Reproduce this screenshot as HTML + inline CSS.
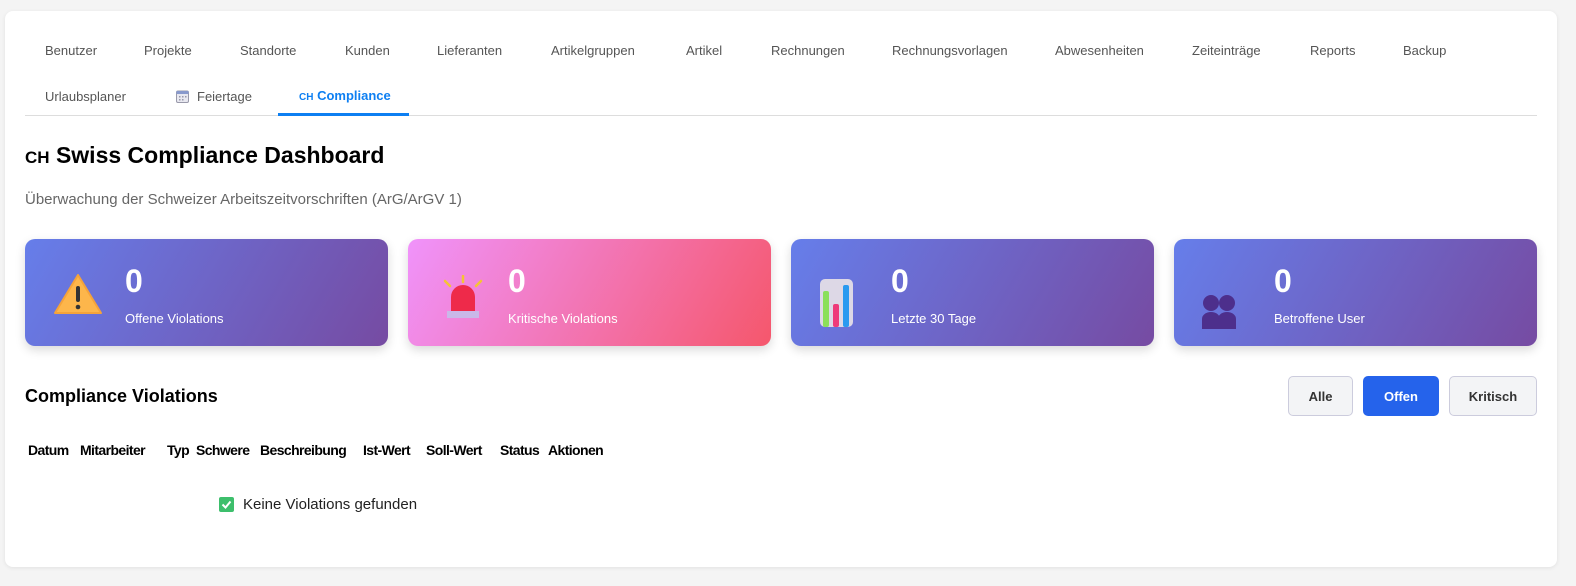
<!DOCTYPE html>
<html><head><meta charset="utf-8"><style>
*{margin:0;padding:0;box-sizing:border-box}
body{width:1576px;height:586px;background:#f4f4f4;font-family:"Liberation Sans",sans-serif;position:relative;overflow:hidden}
.box{position:absolute;left:5px;top:11px;width:1552px;height:556px;background:#fff;border-radius:8px;box-shadow:0 1px 4px rgba(0,0,0,.08)}
.a{position:absolute;white-space:nowrap}
.tab{font-size:13px;color:#555;top:43px}
.t2{top:89px}
.card{position:absolute;top:239px;width:363px;height:107px;border-radius:10px;background:linear-gradient(120deg,#667eea,#764ba2);box-shadow:0 4px 10px rgba(0,0,0,.15);color:#fff}
.card .n{position:absolute;left:100px;top:24px;font-size:32px;font-weight:bold}
.card .l{position:absolute;left:100px;top:72px;font-size:13px}
.card svg{position:absolute;left:28px;top:34px}
.btn{position:absolute;top:376px;height:40px;border-radius:5px;border:1px solid #ccd;background:#f3f4f6;font-size:13px;font-weight:bold;color:#333;display:flex;align-items:center;justify-content:center}
.th{top:442px;font-size:14px;font-weight:bold;letter-spacing:-0.6px;color:#000}
</style></head><body>
<div class="box"></div>
<span class="a tab" style="left:45px">Benutzer</span>
<span class="a tab" style="left:144px">Projekte</span>
<span class="a tab" style="left:240px">Standorte</span>
<span class="a tab" style="left:345px">Kunden</span>
<span class="a tab" style="left:437px">Lieferanten</span>
<span class="a tab" style="left:551px">Artikelgruppen</span>
<span class="a tab" style="left:686px">Artikel</span>
<span class="a tab" style="left:771px">Rechnungen</span>
<span class="a tab" style="left:892px">Rechnungsvorlagen</span>
<span class="a tab" style="left:1055px">Abwesenheiten</span>
<span class="a tab" style="left:1192px">Zeiteinträge</span>
<span class="a tab" style="left:1310px">Reports</span>
<span class="a tab" style="left:1403px">Backup</span>
<span class="a tab t2" style="left:45px">Urlaubsplaner</span>
<svg class="a" style="left:176px;top:90px" width="13" height="13"><rect x="0.5" y="1" width="12" height="11.5" rx="1.5" fill="#e8e8f0" stroke="#99a"/><rect x="0.5" y="1" width="12" height="3" fill="#8899cc"/><g fill="#99a"><rect x="3" y="6" width="1.5" height="1.5"/><rect x="6" y="6" width="1.5" height="1.5"/><rect x="9" y="6" width="1.5" height="1.5"/><rect x="3" y="9" width="1.5" height="1.5"/><rect x="6" y="9" width="1.5" height="1.5"/></g></svg>
<span class="a tab t2" style="left:197px">Feiertage</span>
<span class="a" style="left:299px;top:88px;font-size:13px;font-weight:bold;color:#0d7ff2"><span style="font-size:10px">CH</span> Compliance</span>
<div class="a" style="left:25px;top:115px;width:1512px;height:1px;background:#ddd"></div>
<div class="a" style="left:278px;top:113px;width:131px;height:3px;background:#0d7ff2"></div>
<div class="a" style="left:25px;top:142px;font-size:23px;font-weight:bold;color:#000"><span style="font-size:17px">CH</span> Swiss Compliance Dashboard</div>
<div class="a" style="left:25px;top:191px;font-size:15px;color:#666">Überwachung der Schweizer Arbeitszeitvorschriften (ArG/ArGV 1)</div>

<div class="card" style="left:25px"><svg width="50" height="42" viewBox="0 0 50 42"><path d="M25 2 L48 40 L2 40 Z" fill="#fdb64b" stroke="#f5a33a" stroke-width="2" stroke-linejoin="round"/><rect x="23" y="13" width="4" height="16" rx="2" fill="#333"/><circle cx="25" cy="34" r="2.3" fill="#333"/></svg><div class="n">0</div><div class="l">Offene Violations</div></div>
<div class="card" style="left:408px;background:linear-gradient(120deg,#f093fb,#f5576c)"><svg width="44" height="46" viewBox="0 0 44 46" style="top:36px;left:33px"><path d="M10 36 V22 a12 12 0 0 1 24 0 V36 Z" fill="#ee2a4a"/><rect x="6" y="36" width="32" height="7" fill="#c9b8e8"/><g stroke="#f5c433" stroke-width="2.5" stroke-linecap="round"><line x1="22" y1="1" x2="22" y2="7"/><line x1="4" y1="6" x2="9" y2="11"/><line x1="40" y1="6" x2="35" y2="11"/></g></svg><div class="n">0</div><div class="l">Kritische Violations</div></div>
<div class="card" style="left:791px"><svg width="34" height="50" viewBox="0 0 34 50" style="top:40px;left:29px"><rect width="33" height="48" rx="5" fill="#ddd8e6"/><rect x="3" y="12" width="6" height="36" rx="2" fill="#8be05a"/><rect x="13" y="25" width="6" height="23" rx="2" fill="#ee3a7a"/><rect x="23" y="6" width="6" height="42" rx="2" fill="#2a9af0"/></svg><div class="n">0</div><div class="l">Letzte 30 Tage</div></div>
<div class="card" style="left:1174px"><svg width="34" height="38" viewBox="0 0 34 38" style="top:54px;left:28px"><g fill="#4d2f8c"><circle cx="9" cy="10" r="8"/><path d="M0 36 V26 a9 7 0 0 1 18 0 V36Z"/><circle cx="25" cy="10" r="8"/><path d="M16 36 V26 a9 7 0 0 1 18 0 V36Z"/></g></svg><div class="n">0</div><div class="l">Betroffene User</div></div>

<div class="a" style="left:25px;top:386px;font-size:18px;font-weight:bold;color:#000">Compliance Violations</div>
<div class="btn" style="left:1288px;width:65px">Alle</div>
<div class="btn" style="left:1363px;width:76px;background:#2563eb;border-color:#2563eb;color:#fff">Offen</div>
<div class="btn" style="left:1449px;width:88px">Kritisch</div>

<span class="a th" style="left:28px">Datum</span>
<span class="a th" style="left:80px">Mitarbeiter</span>
<span class="a th" style="left:167px">Typ</span>
<span class="a th" style="left:196px">Schwere</span>
<span class="a th" style="left:260px">Beschreibung</span>
<span class="a th" style="left:363px">Ist-Wert</span>
<span class="a th" style="left:426px">Soll-Wert</span>
<span class="a th" style="left:500px">Status</span>
<span class="a th" style="left:548px">Aktionen</span>

<svg class="a" style="left:219px;top:497px" width="15" height="15"><rect width="15" height="15" rx="2" fill="#3dbf6c"/><path d="M3.5 7.5 L6.5 10.5 L11.5 4.5" stroke="#fff" stroke-width="2" fill="none"/></svg>
<div class="a" style="left:243px;top:496px;font-size:15px;color:#222">Keine Violations gefunden</div>
</body></html>
